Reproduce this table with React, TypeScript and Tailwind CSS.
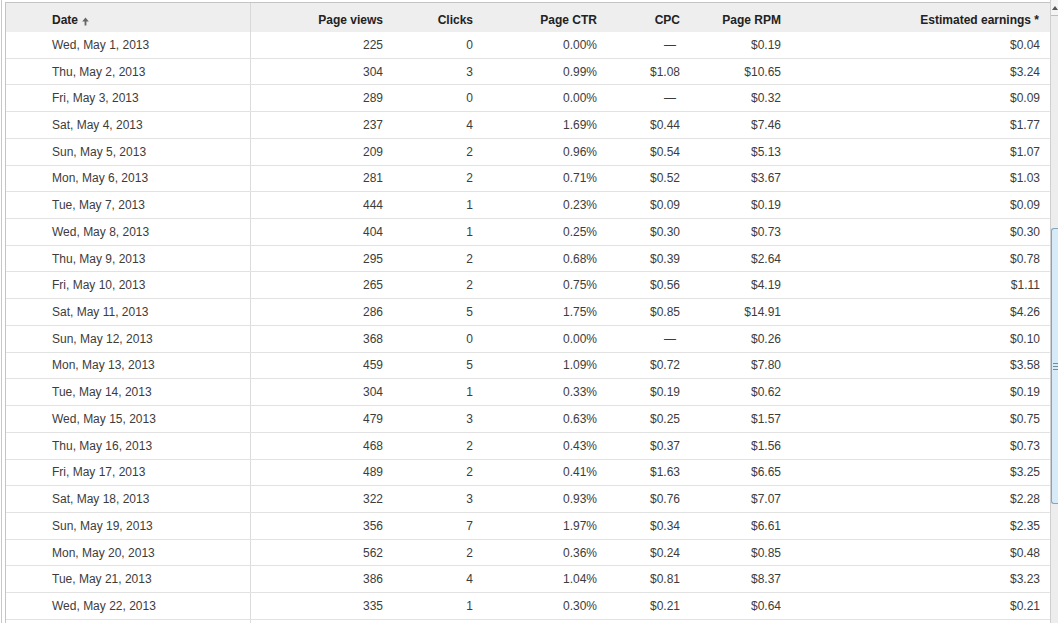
const rows = [
  ['Wed, May 1, 2013', '225', '0', '0.00%', '—', '$0.19', '$0.04'],
  ['Thu, May 2, 2013', '304', '3', '0.99%', '$1.08', '$10.65', '$3.24'],
  ['Fri, May 3, 2013', '289', '0', '0.00%', '—', '$0.32', '$0.09'],
  ['Sat, May 4, 2013', '237', '4', '1.69%', '$0.44', '$7.46', '$1.77'],
  ['Sun, May 5, 2013', '209', '2', '0.96%', '$0.54', '$5.13', '$1.07'],
  ['Mon, May 6, 2013', '281', '2', '0.71%', '$0.52', '$3.67', '$1.03'],
  ['Tue, May 7, 2013', '444', '1', '0.23%', '$0.09', '$0.19', '$0.09'],
  ['Wed, May 8, 2013', '404', '1', '0.25%', '$0.30', '$0.73', '$0.30'],
  ['Thu, May 9, 2013', '295', '2', '0.68%', '$0.39', '$2.64', '$0.78'],
  ['Fri, May 10, 2013', '265', '2', '0.75%', '$0.56', '$4.19', '$1.11'],
  ['Sat, May 11, 2013', '286', '5', '1.75%', '$0.85', '$14.91', '$4.26'],
  ['Sun, May 12, 2013', '368', '0', '0.00%', '—', '$0.26', '$0.10'],
  ['Mon, May 13, 2013', '459', '5', '1.09%', '$0.72', '$7.80', '$3.58'],
  ['Tue, May 14, 2013', '304', '1', '0.33%', '$0.19', '$0.62', '$0.19'],
  ['Wed, May 15, 2013', '479', '3', '0.63%', '$0.25', '$1.57', '$0.75'],
  ['Thu, May 16, 2013', '468', '2', '0.43%', '$0.37', '$1.56', '$0.73'],
  ['Fri, May 17, 2013', '489', '2', '0.41%', '$1.63', '$6.65', '$3.25'],
  ['Sat, May 18, 2013', '322', '3', '0.93%', '$0.76', '$7.07', '$2.28'],
  ['Sun, May 19, 2013', '356', '7', '1.97%', '$0.34', '$6.61', '$2.35'],
  ['Mon, May 20, 2013', '562', '2', '0.36%', '$0.24', '$0.85', '$0.48'],
  ['Tue, May 21, 2013', '386', '4', '1.04%', '$0.81', '$8.37', '$3.23'],
  ['Wed, May 22, 2013', '335', '1', '0.30%', '$0.21', '$0.64', '$0.21'],
]

const cols = 'grid grid-cols-[245px_132px_90px_124px_83px_101px_259px]'

function SortArrow() {
  return (
    <svg width="7" height="9" viewBox="0 0 7 9" className="ml-[4px] mt-[2px] inline-block">
      <path d="M3.5 0.5 L6.8 4.5 H4.4 V8.5 H2.6 V4.5 H0.2 Z" fill="#666" />
    </svg>
  )
}

export default function App() {
  return (
    <div className="flex h-[623px] w-[1058px] overflow-hidden bg-white font-['Liberation_Sans',Arial,sans-serif] text-[12px]">
      <div className="ml-[1px] flex flex-1 border-l border-[#c8c8c8] pl-[3px] pt-[2px]">
        <div className="flex-1 border-l border-t border-[#c4c4c4]">
          {/* header */}
          <div className={`${cols} h-[29px] items-center bg-[#eeeeee] pt-[5px] font-bold text-[#222]`}>
            <div className="-mt-[5px] flex h-[29px] items-center border-r border-[#d8d8d8] pl-[46px] pt-[5px]">
              Date
              <SortArrow />
            </div>
            <div className="text-right">Page views</div>
            <div className="text-right">Clicks</div>
            <div className="text-right">Page CTR</div>
            <div className="text-right">CPC</div>
            <div className="text-right">Page RPM</div>
            <div className="pr-px text-right">Estimated earnings *</div>
          </div>

          {rows.map((r) => (
            <div key={r[0]} className={`${cols} h-[26.72px] items-center border-b border-[#e2e2e2] text-[#3c3c3c]`}>
              <div className="flex h-full items-center border-r border-[#dcdcdc] pl-[46px]">{r[0]}</div>
              {r.slice(1).map((v, i) => (
                <div key={i} className={`text-right ${v === '—' ? 'pr-[4px]' : ''}`}>
                  {v}
                </div>
              ))}
            </div>
          ))}
          <div className={`${cols} h-[26px]`}>
            <div className="h-full border-r border-[#dcdcdc]" />
          </div>
        </div>
      </div>

      {/* scrollbar stub */}
      <div className="flex w-[8px] flex-col border-l border-[#cfcfcf] bg-[#ededed]">
        <div className="flex h-[16px] items-center justify-center rounded-tl-[2px] border-b border-[#bdbdbd] bg-[#f4f4f4]">
          <svg width="6" height="4" viewBox="0 0 6 4">
            <path d="M0 4 L3 0 L6 4 Z" fill="#555" />
          </svg>
        </div>
        <div className="h-[212px]" />
        <div className="flex h-[276px] flex-col items-center justify-center gap-[2px] rounded-tl-[3px] rounded-bl-[3px] border border-r-0 border-[#7ea6c0] bg-[#d6ebf7]">
          <div className="h-px w-[5px] bg-[#6b8ea5]" />
          <div className="h-px w-[5px] bg-[#6b8ea5]" />
          <div className="h-px w-[5px] bg-[#6b8ea5]" />
        </div>
        <div className="flex-1" />
      </div>
    </div>
  )
}
